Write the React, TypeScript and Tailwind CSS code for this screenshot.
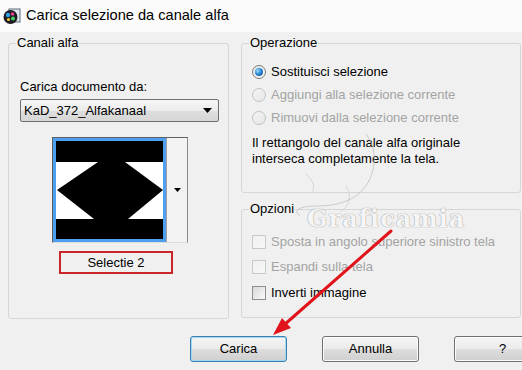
const Radio = ({ checked = false, disabled = false }: { checked?: boolean; disabled?: boolean }) => (
  <span
    className={`flex items-center justify-center w-[14px] h-[14px] rounded-full border bg-gradient-to-br ${
      disabled ? "border-[#c2c2c2] from-[#f4f4f4] to-[#e6e6e6]" : "border-[#7b7b7b] from-[#e4e4e4] to-[#fafafa]"
    }`}
  >
    {checked && (
      <span className="w-[8px] h-[8px] rounded-full bg-[radial-gradient(circle_at_35%_35%,#9fdcff_0%,#2a8ad4_45%,#0b3e74_100%)]" />
    )}
  </span>
)

const Check = ({ disabled = false }: { disabled?: boolean }) => (
  <span
    className={`w-[14px] h-[14px] border bg-gradient-to-br ${
      disabled ? "border-[#c9c9c9] from-[#f0f0f0] to-[#f7f7f7]" : "border-[#8e8f8f] from-[#d8d8d8] to-[#fafafa]"
    }`}
  />
)

const Button = ({ label, focused = false }: { label: string; focused?: boolean }) => (
  <button
    className={`shrink-0 w-[97px] h-[26px] rounded-[3px] border text-[13px] text-black bg-[linear-gradient(#f4f4f4_0%,#ebebeb_48%,#dddddd_52%,#cfcfcf_100%)] ${
      focused ? "border-[#3c7fb1] shadow-[inset_0_0_0_1px_#9fd8f2]" : "border-[#707070] shadow-[inset_0_0_0_1px_#fcfcfc]"
    }`}
  >
    {label}
  </button>
)

export default function App() {
  return (
    <div className="relative w-[522px] h-[370px] overflow-hidden bg-[#f0f0f0] text-[13px] text-black font-['Liberation_Sans',Arial,sans-serif]">
      {/* title bar */}
      <div className="h-[32px] bg-[#fbfbfb] flex items-center gap-[5px] pl-[3px]">
        <svg width="18" height="18" viewBox="0 0 18 18">
          <rect x="6" y="2" width="11" height="13" fill="#dfe6ee" stroke="#5a6a7a" />
          <circle cx="7.5" cy="10" r="7" fill="#1c1c22" />
          <circle cx="5" cy="8" r="2.2" fill="#2fa3e8" />
          <circle cx="9.5" cy="7" r="1.8" fill="#e63b8f" />
          <circle cx="10" cy="11.5" r="2" fill="#3fd16a" />
          <circle cx="5.5" cy="12.5" r="1.6" fill="#f2c43a" />
        </svg>
        <span className="text-[14.6px] text-black">Carica selezione da canale alfa</span>
      </div>

      <div className="flex gap-[12px] pl-[8px] pt-[3px]">
        {/* alpha channels */}
        <fieldset className="w-[221px] h-[284px] border border-[#d3d7da] rounded-[3px] p-0">
          <legend className="ml-[7px] px-[1px] leading-[16px]">Canali alfa</legend>
          <div className="pl-[11px] flex flex-col">
            <span className="mt-[28px] leading-[16px]">Carica documento da:</span>
            <div className="mt-[4px] w-[199px] h-[23px] rounded-[2px] border border-[#707070] bg-[linear-gradient(#f6f6f6_0%,#ececec_50%,#dedede_52%,#d6d6d6_100%)] flex items-center justify-between pl-[3px] pr-[6px]">
              <span>KaD_372_Alfakanaal</span>
              <svg width="9" height="5" viewBox="0 0 9 5">
                <path d="M0 0h9L4.5 5z" fill="#000" />
              </svg>
            </div>
            <div className="mt-[15px] ml-[32px] w-[136px] h-[106px] flex border border-[#5f5f5f] border-r-[#8a8a8a] border-b-[#dcdcdc] bg-white">
              <div className="w-[113px] h-[104px] border-[3px] border-[#4d9ff0] bg-white">
                <svg width="107" height="98" viewBox="0 0 107 98" className="block">
                  <rect x="0" y="0" width="107" height="21" fill="#000" />
                  <rect x="0" y="78" width="107" height="20" fill="#000" />
                  <path d="M42 21H69L107 49L72 78H38L1 49Z" fill="#000" />
                </svg>
              </div>
              <div className="flex-1 bg-[#f3f3f3] border-l border-[#a0a0a0] flex items-center justify-center">
                <svg width="7" height="4" viewBox="0 0 7 4">
                  <path d="M0 0h7L3.5 4z" fill="#000" />
                </svg>
              </div>
            </div>
            <div className="mt-[8px] ml-[39px] w-[114px] h-[23px] border-2 border-[#c8262a] flex items-center justify-center">
              Selectie 2
            </div>
          </div>
        </fieldset>

        <div className="w-[280px] flex flex-col gap-[8px]">
          {/* operation */}
          <fieldset className="h-[158px] border border-[#d3d7da] rounded-[3px] p-0">
            <legend className="ml-[7px] px-[1px] leading-[16px]">Operazione</legend>
            <div className="pl-[10px] flex flex-col">
              <label className="mt-[9px] h-[23px] flex items-center gap-[5px]">
                <Radio checked />
                <span>Sostituisci selezione</span>
              </label>
              <label className="h-[23px] flex items-center gap-[5px] text-[#a3a3a3]">
                <Radio disabled />
                <span>Aggiungi alla selezione corrente</span>
              </label>
              <label className="h-[23px] flex items-center gap-[5px] text-[#a3a3a3]">
                <Radio disabled />
                <span>Rimuovi dalla selezione corrente</span>
              </label>
              <p className="mt-[6px] leading-[16px]">
                Il rettangolo del canale alfa originale
                <br />
                interseca completamente la tela.
              </p>
            </div>
          </fieldset>

          {/* options */}
          <fieldset className="h-[117px] border border-[#d3d7da] rounded-[3px] p-0">
            <legend className="ml-[7px] px-[1px] leading-[16px]">Opzioni</legend>
            <div className="pl-[10px] flex flex-col">
              <label className="mt-[12px] h-[25px] flex items-center gap-[5px] text-[#a3a3a3]">
                <Check disabled />
                <span>Sposta in angolo superiore sinistro tela</span>
              </label>
              <label className="h-[26px] flex items-center gap-[5px] text-[#a3a3a3]">
                <Check disabled />
                <span>Espandi sulla tela</span>
              </label>
              <label className="h-[25px] flex items-center gap-[5px]">
                <Check />
                <span>Inverti immagine</span>
              </label>
            </div>
          </fieldset>
        </div>
      </div>

      {/* dialog buttons */}
      <div className="mt-[17px] pl-[190px] flex gap-[35px]">
        <Button label="Carica" focused />
        <Button label="Annulla" />
        <Button label="?" />
      </div>

      {/* watermark */}
      <svg className="absolute left-0 top-0 pointer-events-none" width="522" height="370" viewBox="0 0 522 370">
        <path d="M366 134C378 150 376 170 366 186C356 200 338 206 318 206C300 206 292 210 300 216" fill="none" stroke="#b9b9b9" strokeWidth="1" opacity="0.7" />
        <path d="M306 174C312 180 316 186 312 192" fill="none" stroke="#c4c4c4" strokeWidth="1" opacity="0.6" />
        <path d="M346 186C352 196 350 206 340 212" fill="none" stroke="#c4c4c4" strokeWidth="1" opacity="0.6" />
      </svg>
      <span className="absolute left-[307px] top-[207px] text-[24px] leading-[24px] font-bold tracking-[1px] text-[#f6f6f6] font-['DejaVu_Serif',serif] [text-shadow:0_0_1px_#9a9a9a,0_0_1px_#9a9a9a] pointer-events-none opacity-90">
        Graficamia
      </span>

      {/* red pointer */}
      <svg className="absolute left-0 top-0 pointer-events-none" width="522" height="370" viewBox="0 0 522 370">
        <line x1="391" y1="231" x2="284" y2="325" stroke="#e0141a" strokeWidth="3" strokeLinecap="round" />
        <path d="M273 335L282 318L291 328Z" fill="#e0141a" />
      </svg>
    </div>
  )
}
